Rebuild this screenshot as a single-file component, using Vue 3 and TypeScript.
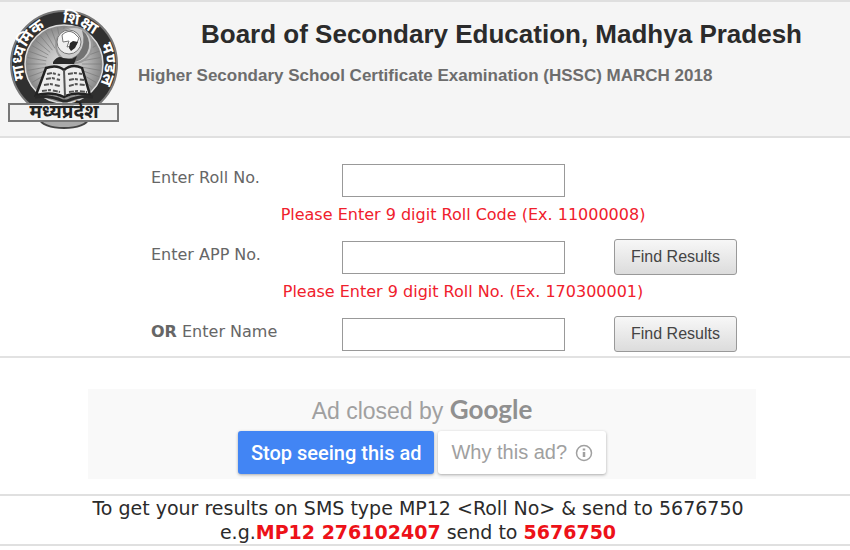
<script setup lang="ts">
import { reactive } from 'vue'

interface Row {
  id: 'roll' | 'app' | 'name'
  prefix?: string
  label: string
  hint?: string
  button: boolean
}

const rows: Row[] = [
  { id: 'roll', label: 'Enter Roll No.', hint: 'Please Enter 9 digit Roll Code (Ex. 11000008)', button: false },
  { id: 'app', label: 'Enter APP No.', hint: 'Please Enter 9 digit Roll No. (Ex. 170300001)', button: true },
  { id: 'name', prefix: 'OR', label: 'Enter Name', button: true },
]

const values = reactive({ roll: '', app: '', name: '' })

const rays = Array.from({ length: 36 }, (_, i) => i * 10)
</script>

<template>
  <div class="page">
    <header class="header">
      <svg class="logo" viewBox="0 0 112 120" aria-hidden="true">
        <defs>
          <path id="ring" d="M26 82A41 41 0 1 1 86 82" />
          <radialGradient id="disc">
            <stop offset="0" stop-color="#e2e2e2" />
            <stop offset="0.6" stop-color="#b5b5b5" />
            <stop offset="1" stop-color="#858585" />
          </radialGradient>
        </defs>
        <ellipse cx="56" cy="109" rx="24" ry="9" fill="#aaa" stroke="#444" stroke-width="2" />
        <circle cx="56" cy="54" r="53" fill="#303030" stroke="#777" stroke-width="2" />
        <circle cx="56" cy="54" r="39" fill="url(#disc)" stroke="#ddd" stroke-width="1.5" />
        <g stroke="#777" stroke-width="0.6">
          <line v-for="a in rays" :key="a" x1="56" y1="36" x2="56" y2="17" :transform="`rotate(${a} 56 54)`" />
        </g>
        <g class="ring-text" text-anchor="middle">
          <text><textPath href="#ring" startOffset="24%">माध्यमिक</textPath></text>
          <text><textPath href="#ring" startOffset="58%">शिक्षा</textPath></text>
          <text><textPath href="#ring" startOffset="84%">मण्डल</textPath></text>
        </g>
        <circle cx="66" cy="35" r="18" fill="#ccc" stroke="#999" stroke-width="2" />
        <path d="M74 20a18 18 0 0 1-7 32q-9 3-16-3 13 2 20-6 7-9 3-23z" fill="#737373" />
        <circle cx="61" cy="32" r="12" fill="#eee" stroke="#777" />
        <path d="M54 25q6-6 12-2l5 5-3 7-9 2 2-6-6 1z" fill="#fff" stroke="#777" />
        <path d="M62 33l3-2 5 1-3 6-4 3-2-3zM45 52q5-7 10-4l9 1 5-3-3 8H45z" fill="#282828" />
        <path d="M38 58q11-4 18 2 8-7 18-2l8 27q-16-4-26 2-12-6-28-2z" fill="#eee" stroke="#222" stroke-width="2.5" />
        <path d="M56 60l1 26" stroke="#555" stroke-width="2" />
        <path d="M39 64l5-1 8 2M38 69l6-1 8 2M36 75l6-1 10 2M34 81l8-1 10 2M60 64l6-1 8 1M61 70l5-1 10 1M61 76l7-2 9 1M61 82l8-1 10 1" fill="none" stroke="#555" stroke-width="2" stroke-dasharray="5 1 3 2" />
        <path d="M27 87q15-2 28 4h4q13-6 26-4" fill="none" stroke="#292929" stroke-width="3" />
        <rect x="1" y="94" width="109" height="17" fill="#f2f2f2" stroke="#777" stroke-width="2" />
        <text class="banner-text" x="56" y="108" text-anchor="middle">मध्यप्रदेश</text>
      </svg>
      <div class="titles">
        <h1>Board of Secondary Education, Madhya Pradesh</h1>
        <h2>Higher Secondary School Certificate Examination (HSSC) MARCH 2018</h2>
      </div>
    </header>

    <main>
      <form class="form" @submit.prevent>
        <template v-for="row in rows" :key="row.id">
          <div class="row">
            <label :for="row.id"><b v-if="row.prefix">{{ row.prefix }}</b> {{ row.label }}</label>
            <input :id="row.id" v-model="values[row.id]" type="text" />
            <button v-if="row.button" class="find" type="submit">Find Results</button>
          </div>
          <p v-if="row.hint" class="hint">{{ row.hint }}</p>
        </template>
      </form>

      <section class="ad">
        <p class="closed">Ad closed by <span class="brand">Google</span></p>
        <div class="choices">
          <button class="stop" type="button">Stop seeing this ad</button>
          <button class="why" type="button">
            Why this ad?
            <svg width="18" height="18" viewBox="0 0 18 18" aria-hidden="true">
              <circle cx="9" cy="9" r="7.5" fill="none" stroke="currentColor" stroke-width="1.5" />
              <path d="M9 8v5M9 4.5v2" stroke="currentColor" stroke-width="2.5" />
            </svg>
          </button>
        </div>
      </section>
    </main>

    <footer class="sms">
      <p>To get your results on SMS type MP12 &lt;Roll No&gt; &amp; send to 5676750</p>
      <p>e.g.<b>MP12 276102407</b> send to <b>5676750</b></p>
    </footer>
  </div>
</template>

<style>
body {
  margin: 0;
  background: #fff;
}
</style>

<style scoped>
.page {
  font-family: "DejaVu Sans", sans-serif;
  color: #666;
}
h1,
h2,
p {
  margin: 0;
}
.header {
  display: flex;
  gap: 18px;
  padding: 8px 8px 6px;
  border-top: 2px solid #dfdfdf;
  border-bottom: 2px solid #e0e0e0;
  background: #f5f5f5;
}
.logo {
  width: 112px;
  height: 120px;
  flex: none;
  overflow: visible;
}
.ring-text,
.banner-text {
  font-family: "Noto Sans", sans-serif;
  font-weight: 700;
}
.ring-text {
  font-size: 16px;
  fill: #fff;
}
.banner-text {
  font-size: 19px;
  fill: #222;
}
.titles {
  font-family: "Liberation Sans", sans-serif;
  flex: 1;
}
h1 {
  padding: 8px 40px 0 0;
  font-size: 26px;
  line-height: 32px;
  color: #2b2b2b;
  text-align: right;
  white-space: nowrap;
}
h2 {
  padding-top: 16px;
  font-size: 17px;
  line-height: 20px;
  color: #6d6d6d;
  white-space: nowrap;
}
.form {
  padding: 24px 75px 4px 151px;
  border-bottom: 2px solid #e2e2e2;
}
.row {
  display: grid;
  grid-template-columns: 191px 223px 123px;
  align-items: center;
  height: 36px;
}
label {
  padding-bottom: 4px;
  font-size: 16px;
  line-height: 20px;
}
input {
  box-sizing: border-box;
  width: 100%;
  height: 33px;
  padding: 0 8px;
  border: 1px solid #999;
  background: #fff;
  font: 16px "DejaVu Sans", sans-serif;
}
.find {
  height: 36px;
  margin-left: 49px;
  width: 123px;
  padding: 0;
  border: 1px solid #999;
  border-radius: 3px;
  background: linear-gradient(#f7f7f7, #dcdcdc);
  font: 16px "Liberation Sans", sans-serif;
  color: #444;
}
.hint {
  padding: 7px 0 14px;
  font-size: 16px;
  line-height: 20px;
  color: #f0202c;
  text-align: center;
  white-space: nowrap;
}
.ad {
  box-sizing: border-box;
  height: 90px;
  margin: 31px 94px 15px 88px;
  padding-top: 5px;
  background: #f9f9f9;
  font-family: "Liberation Sans", sans-serif;
  text-align: center;
}
.closed {
  font-size: 23px;
  line-height: 30px;
  color: #a0a0a0;
}
.brand {
  font-family: Lato, sans-serif;
  font-size: 26px;
  font-weight: 700;
  color: #909090;
}
.choices {
  display: flex;
  justify-content: center;
  gap: 4px;
  padding-top: 5px;
}
.choices button {
  display: flex;
  align-items: center;
  justify-content: center;
  gap: 8px;
  height: 43px;
  padding: 0 13px;
  border: 0;
  border-radius: 3px;
  box-shadow: 0 1px 3px #aaa;
  font: 20px "Liberation Sans", sans-serif;
  white-space: nowrap;
}
.choices .stop {
  background: #4285f4;
  font: 500 20px Roboto, sans-serif;
  color: #fff;
}
.choices .why {
  background: #fff;
  color: #a0a0a0;
}
.sms {
  padding: 0 14px 0 0;
  border-top: 2px solid #e0e0e0;
  border-bottom: 2px solid #e0e0e0;
  font-size: 19px;
  line-height: 24px;
  color: #2b2b2b;
  text-align: center;
}
.sms b {
  color: #ed1118;
}
</style>
